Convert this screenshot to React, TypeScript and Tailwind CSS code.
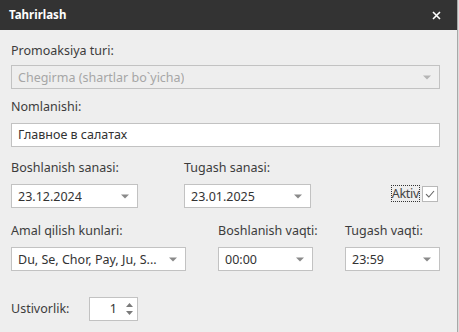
import React from 'react';

const font = "font-['Segoe_UI','Noto_Sans',sans-serif]";

const Arrow = ({ light }: { light?: boolean }) => (
  <svg width="8" height="5" viewBox="0 0 8 5" className="shrink-0">
    <path d="M0 0.5h8L4 4.5z" fill={light ? '#b5b5b5' : '#8a8a8a'} />
  </svg>
);

const Label = ({ children, className = '' }: { children: React.ReactNode; className?: string }) => (
  <div className={`h-[17px] whitespace-nowrap text-[12.5px] leading-[17px] text-[#3c3c3c] ${className}`}>{children}</div>
);

const Select = ({ value, width, disabled }: { value: string; width: string; disabled?: boolean }) => (
  <div
    className={`flex h-[24px] items-center justify-between border border-[#c2c2c2] pl-[6px] pr-[8px] ${width} ${
      disabled ? 'bg-[#eeeeee] text-[#a6a6a6]' : 'bg-white text-[#333]'
    }`}
  >
    <span className="truncate text-[12.5px] leading-[17px]">{value}</span>
    <Arrow light={disabled} />
  </div>
);

const App = () => {
  return (
    <div className={`flex h-[332px] w-[459px] ${font}`}>
      <div className="flex w-[457px] flex-col">
        <div className="flex h-[30px] items-center justify-between bg-[#333333] pl-[9px] pr-[16px]">
          <span className="text-[11.5px] font-bold text-white">Tahrirlash</span>
          <svg width="9" height="9" viewBox="0 0 9 9">
            <path d="M1 1l7 7M8 1L1 8" stroke="#fff" strokeWidth="1.6" />
          </svg>
        </div>
        <div className="flex-1 bg-[#eeeeee] pl-[11px] pr-[17px] pt-[12px]">
          <Label className="mb-[6px]">Promoaksiya turi:</Label>
          <Select value="Chegirma (shartlar bo`yicha)" width="w-full" disabled />

          <Label className="mb-[8px] mt-[9px]">Nomlanishi:</Label>
          <div className="flex h-[24px] items-center border border-[#c2c2c2] bg-white pl-[6px] text-[12.5px] text-[#333]">
            Главное в салатах
          </div>

          <div className="mt-[12px] flex">
            <div className="w-[127px]">
              <Label className="mb-[8px]">Boshlanish sanasi:</Label>
              <Select value="23.12.2024" width="w-[127px]" />
            </div>
            <div className="ml-[46px] w-[127px]">
              <Label className="mb-[8px]">Tugash sanasi:</Label>
              <Select value="23.01.2025" width="w-[127px]" />
            </div>
            <div className="ml-auto mr-[2px] mt-[26px] flex h-[17px] items-center">
              <span className="border border-dotted border-[#333] text-[12.5px] leading-[15px] tracking-[-0.3px] text-[#444]">
                Aktiv
              </span>
              <div className="ml-[2px] flex h-[16px] w-[16px] items-center justify-center border border-[#b8b8b8] bg-white">
                <svg width="10" height="8" viewBox="0 0 10 8">
                  <path d="M1 4.2l2.8 2.8L9 1" fill="none" stroke="#666" strokeWidth="1.1" />
                </svg>
              </div>
            </div>
          </div>

          <div className="mt-[14px] flex">
            <div className="w-[175px]">
              <Label className="mb-[8px]">Amal qilish kunlari:</Label>
              <Select value="Du, Se, Chor, Pay, Ju, S..." width="w-[175px]" />
            </div>
            <div className="ml-[32px] w-[95px]">
              <Label className="mb-[8px]">Boshlanish vaqti:</Label>
              <Select value="00:00" width="w-[95px]" />
            </div>
            <div className="ml-[32px] w-[95px]">
              <Label className="mb-[8px]">Tugash vaqti:</Label>
              <Select value="23:59" width="w-[95px]" />
            </div>
          </div>

          <div className="mt-[26px] flex items-center">
            <span className="w-[78px] text-[12.5px] text-[#3c3c3c]">Ustivorlik:</span>
            <div className="flex h-[24px] w-[49px] items-center justify-end border border-[#c2c2c2] bg-white pr-[4px]">
              <span className="text-[12.5px] text-[#333]">1</span>
              <div className="ml-[9px] flex flex-col gap-[4px]">
                <svg width="7" height="4" viewBox="0 0 7 4">
                  <path d="M0 4h7L3.5 0z" fill="#7a7a7a" />
                </svg>
                <svg width="7" height="4" viewBox="0 0 7 4">
                  <path d="M0 0h7L3.5 4z" fill="#7a7a7a" />
                </svg>
              </div>
            </div>
          </div>
        </div>
      </div>
      <div className="w-[2px] border-l border-[#a8a8a8] bg-[#dcdcdc]" />
    </div>
  );
};

export default App;
